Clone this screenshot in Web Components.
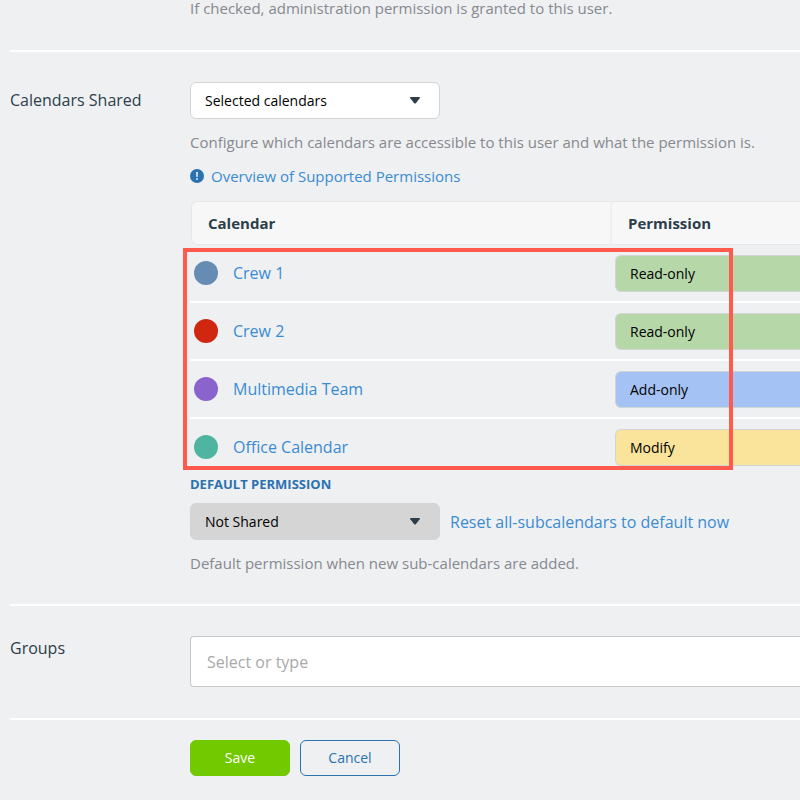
<!DOCTYPE html>
<html lang="en">
<head>
<meta charset="utf-8">
<meta name="viewport" content="width=device-width, initial-scale=1">
<title>Calendar permissions</title>
<style>
  html { background: #eff0f2; }
  body { margin: 0; font: 16px/22px "Open Sans", sans-serif; color: #2d3e4a; }
</style>
</head>
<body>
<user-form></user-form>

<script>
const define = (name, html, setup) => customElements.define(name, class extends HTMLElement {
  constructor() {
    super();
    const template = document.createElement('template');
    template.innerHTML = html;
    this.attachShadow({ mode: 'open' }).append(template.content.cloneNode(true));
  }
  connectedCallback() { if (setup) setup(this); }
});

/* One row of the form: a label column and a content column. */
define('form-row', `
  <style>
    :host { display: grid; grid-template-columns: 180px minmax(0, 1fr); padding: 30px 0 31px; border-bottom: 2px solid #fff; }
    :host([first]) { --help-line: 16px; padding: 0 0 34px; }
    :host([last]) { padding: 20px 0; border: 0; }
    .label { padding-top: 1px; }
    :host([centered]) .label { padding-top: 7px; }
  </style>
  <div class="label"><slot name="label"></slot></div>
  <div><slot></slot></div>`);

define('help-text', `
  <style>:host { display: block; font-size: 15px; line-height: var(--help-line, 20px); color: #86898f; }</style>
  <slot></slot>`);

/* Frame and arrow round a native drop-down; "wide" runs flush to the right edge, without an arrow. */
define('select-box', `
  <style>
    :host { display: block; position: relative; box-sizing: border-box; width: 250px; height: 37px; flex: none;
      border: 1px solid #d3d4d6; border-radius: 6px; background: #fff; }
    :host([tone=muted]) { background: #d5d5d5; border-color: #d5d5d5; }
    :host([tone=read]) { background: #b6d7a8; }
    :host([tone=add]) { background: #a4c2f4; }
    :host([tone=modify]) { background: #fae39a; }
    :host([wide]) { width: 100%; border-right: 0; border-radius: 6px 0 0 6px; }
    :host([wide]) svg { display: none; }
    ::slotted(select) { appearance: none; box-sizing: border-box; display: block; width: 100%; height: 100%; margin: 0;
      padding: 0 40px 0 14px; border: 0; border-radius: 5px; background: transparent; color: #000;
      font: 14px/20px "Open Sans", sans-serif; }
    svg { position: absolute; right: 19px; top: 14px; pointer-events: none; }
  </style>
  <slot></slot>
  <svg width="10" height="7" viewBox="0 0 10 7" aria-hidden="true"><path d="M.7 0h8.6q1 .3.4 1.2L5.8 6.2q-.8.7-1.6 0L.3 1.2Q-.3.3.7 0z" fill="#2d3e4a"/></svg>`);

define('push-button', `
  <style>
    :host { display: block; }
    button { box-sizing: border-box; width: 100px; height: 36px; padding: 0; border: 1px solid #2a72b0; border-radius: 6px;
      background: transparent; color: #2a72b0; font: 14px/20px "Open Sans", sans-serif; }
    :host([primary]) button { background: #72c900; border-color: #72c900; color: #fff; }
  </style>
  <button type="button"><slot></slot></button>`);

define('calendar-table', `
  <style>
    :host { display: block; position: relative; }
    table { width: 100%; table-layout: fixed; border-collapse: separate; border-spacing: 0; }
    th, td { padding: 0; text-align: left; }
    th:first-child { width: 422px; }
    th div { box-sizing: border-box; height: 44px; padding: 11px 16px; border: 1px solid #e6e7e9; border-width: 1px 0;
      background: #f7f7f7; font-size: 15px; line-height: 20px; font-weight: 700; }
    th:first-child div { margin: 0 2px 0 1px; border-left-width: 1px; border-radius: 6px 0 0 6px; }
    td { height: 56px; border-bottom: 2px solid #fff; vertical-align: middle; }
    tr:last-child td { border-bottom: 0; }
    .name { display: flex; align-items: center; gap: 15px; padding-left: 4px; }
    .dot { width: 24px; height: 24px; border-radius: 50%; }
    .choice { padding: 1px 0 0 3px; }
    a { color: #3a8bd2; text-decoration: none; }
    .highlight { position: absolute; box-sizing: border-box; left: -7px; top: 47px; bottom: 5px; width: 550px;
      border: 4px solid #ff5a4d; pointer-events: none; }
  </style>
  <table>
    <thead><tr><th scope="col"><div>Calendar</div></th><th scope="col"><div>Permission</div></th></tr></thead>
    <tbody></tbody>
  </table>
  <div class="highlight"></div>`, host => {
  const rows = [
    ['Crew 1', '#668cb3', 'read', 'Read-only'],
    ['Crew 2', '#cf2710', 'read', 'Read-only'],
    ['Multimedia Team', '#8a64cc', 'add', 'Add-only'],
    ['Office Calendar', '#4fb5a1', 'modify', 'Modify']
  ];
  host.shadowRoot.querySelector('tbody').innerHTML = rows.map(([name, color, tone, value], i) => `
    <tr>
      <td><div class="name"><span class="dot" style="background:${color}"></span><a href="#" id="name${i}">${name}</a></div></td>
      <td><div class="choice"><select-box wide tone="${tone}"><select aria-labelledby="name${i}"><option>${value}</option></select></select-box></div></td>
    </tr>`).join('');
});

define('user-form', `
  <style>
    :host { display: block; padding-left: 10px; }
    a { color: #3a8bd2; text-decoration: none; }
    .stack { display: flex; flex-direction: column; }
    .overview { display: flex; align-items: center; gap: 7px; margin: 14px 0 15px; font-size: 15px; line-height: 20px; }
    .shared-help, .default-help { margin-top: 13px; }
    .subhead { margin-bottom: 10px; font-size: 13px; line-height: 18px; font-weight: 700; color: #2a72b0; }
    .inline { display: flex; align-items: center; gap: 10px; }
    input { display: block; box-sizing: border-box; width: 100%; height: 51px; padding: 0 16px; border: 1px solid #c6c8cb;
      border-right: 0; border-radius: 4px 0 0 4px; background: #fff; color: #2d3e4a; font: 16px/22px "Open Sans", sans-serif; }
    input::placeholder { color: #a9a9a9; opacity: 1; }
  </style>
  <form-row first><help-text>If checked, administration permission is granted to this user.</help-text></form-row>
  <form-row centered>
    <label slot="label" for="shared">Calendars Shared</label>
    <div class="stack">
      <select-box><select id="shared"><option>Selected calendars</option></select></select-box>
      <help-text class="shared-help">Configure which calendars are accessible to this user and what the permission is.</help-text>
      <div class="overview">
        <svg width="14" height="14" viewBox="0 0 14 14" aria-hidden="true"><circle cx="7" cy="7" r="7" fill="#2a72b0"/><path d="M6 3h2l-.3 5H6.300z" fill="#dfe8f1"/><circle cx="7" cy="10" r="1" fill="#dfe8f1"/></svg>
        <a href="#">Overview of Supported Permissions</a>
      </div>
      <calendar-table></calendar-table>
      <label class="subhead" for="default">DEFAULT PERMISSION</label>
      <div class="inline">
        <select-box tone="muted"><select id="default"><option>Not Shared</option></select></select-box>
        <a href="#">Reset all-subcalendars to default now</a>
      </div>
      <help-text class="default-help">Default permission when new sub-calendars are added.</help-text>
    </div>
  </form-row>
  <form-row>
    <label slot="label" for="groups">Groups</label>
    <input id="groups" type="text" placeholder="Select or type">
  </form-row>
  <form-row last>
    <div class="inline"><push-button primary>Save</push-button><push-button>Cancel</push-button></div>
  </form-row>`);
</script>
</body>
</html>
